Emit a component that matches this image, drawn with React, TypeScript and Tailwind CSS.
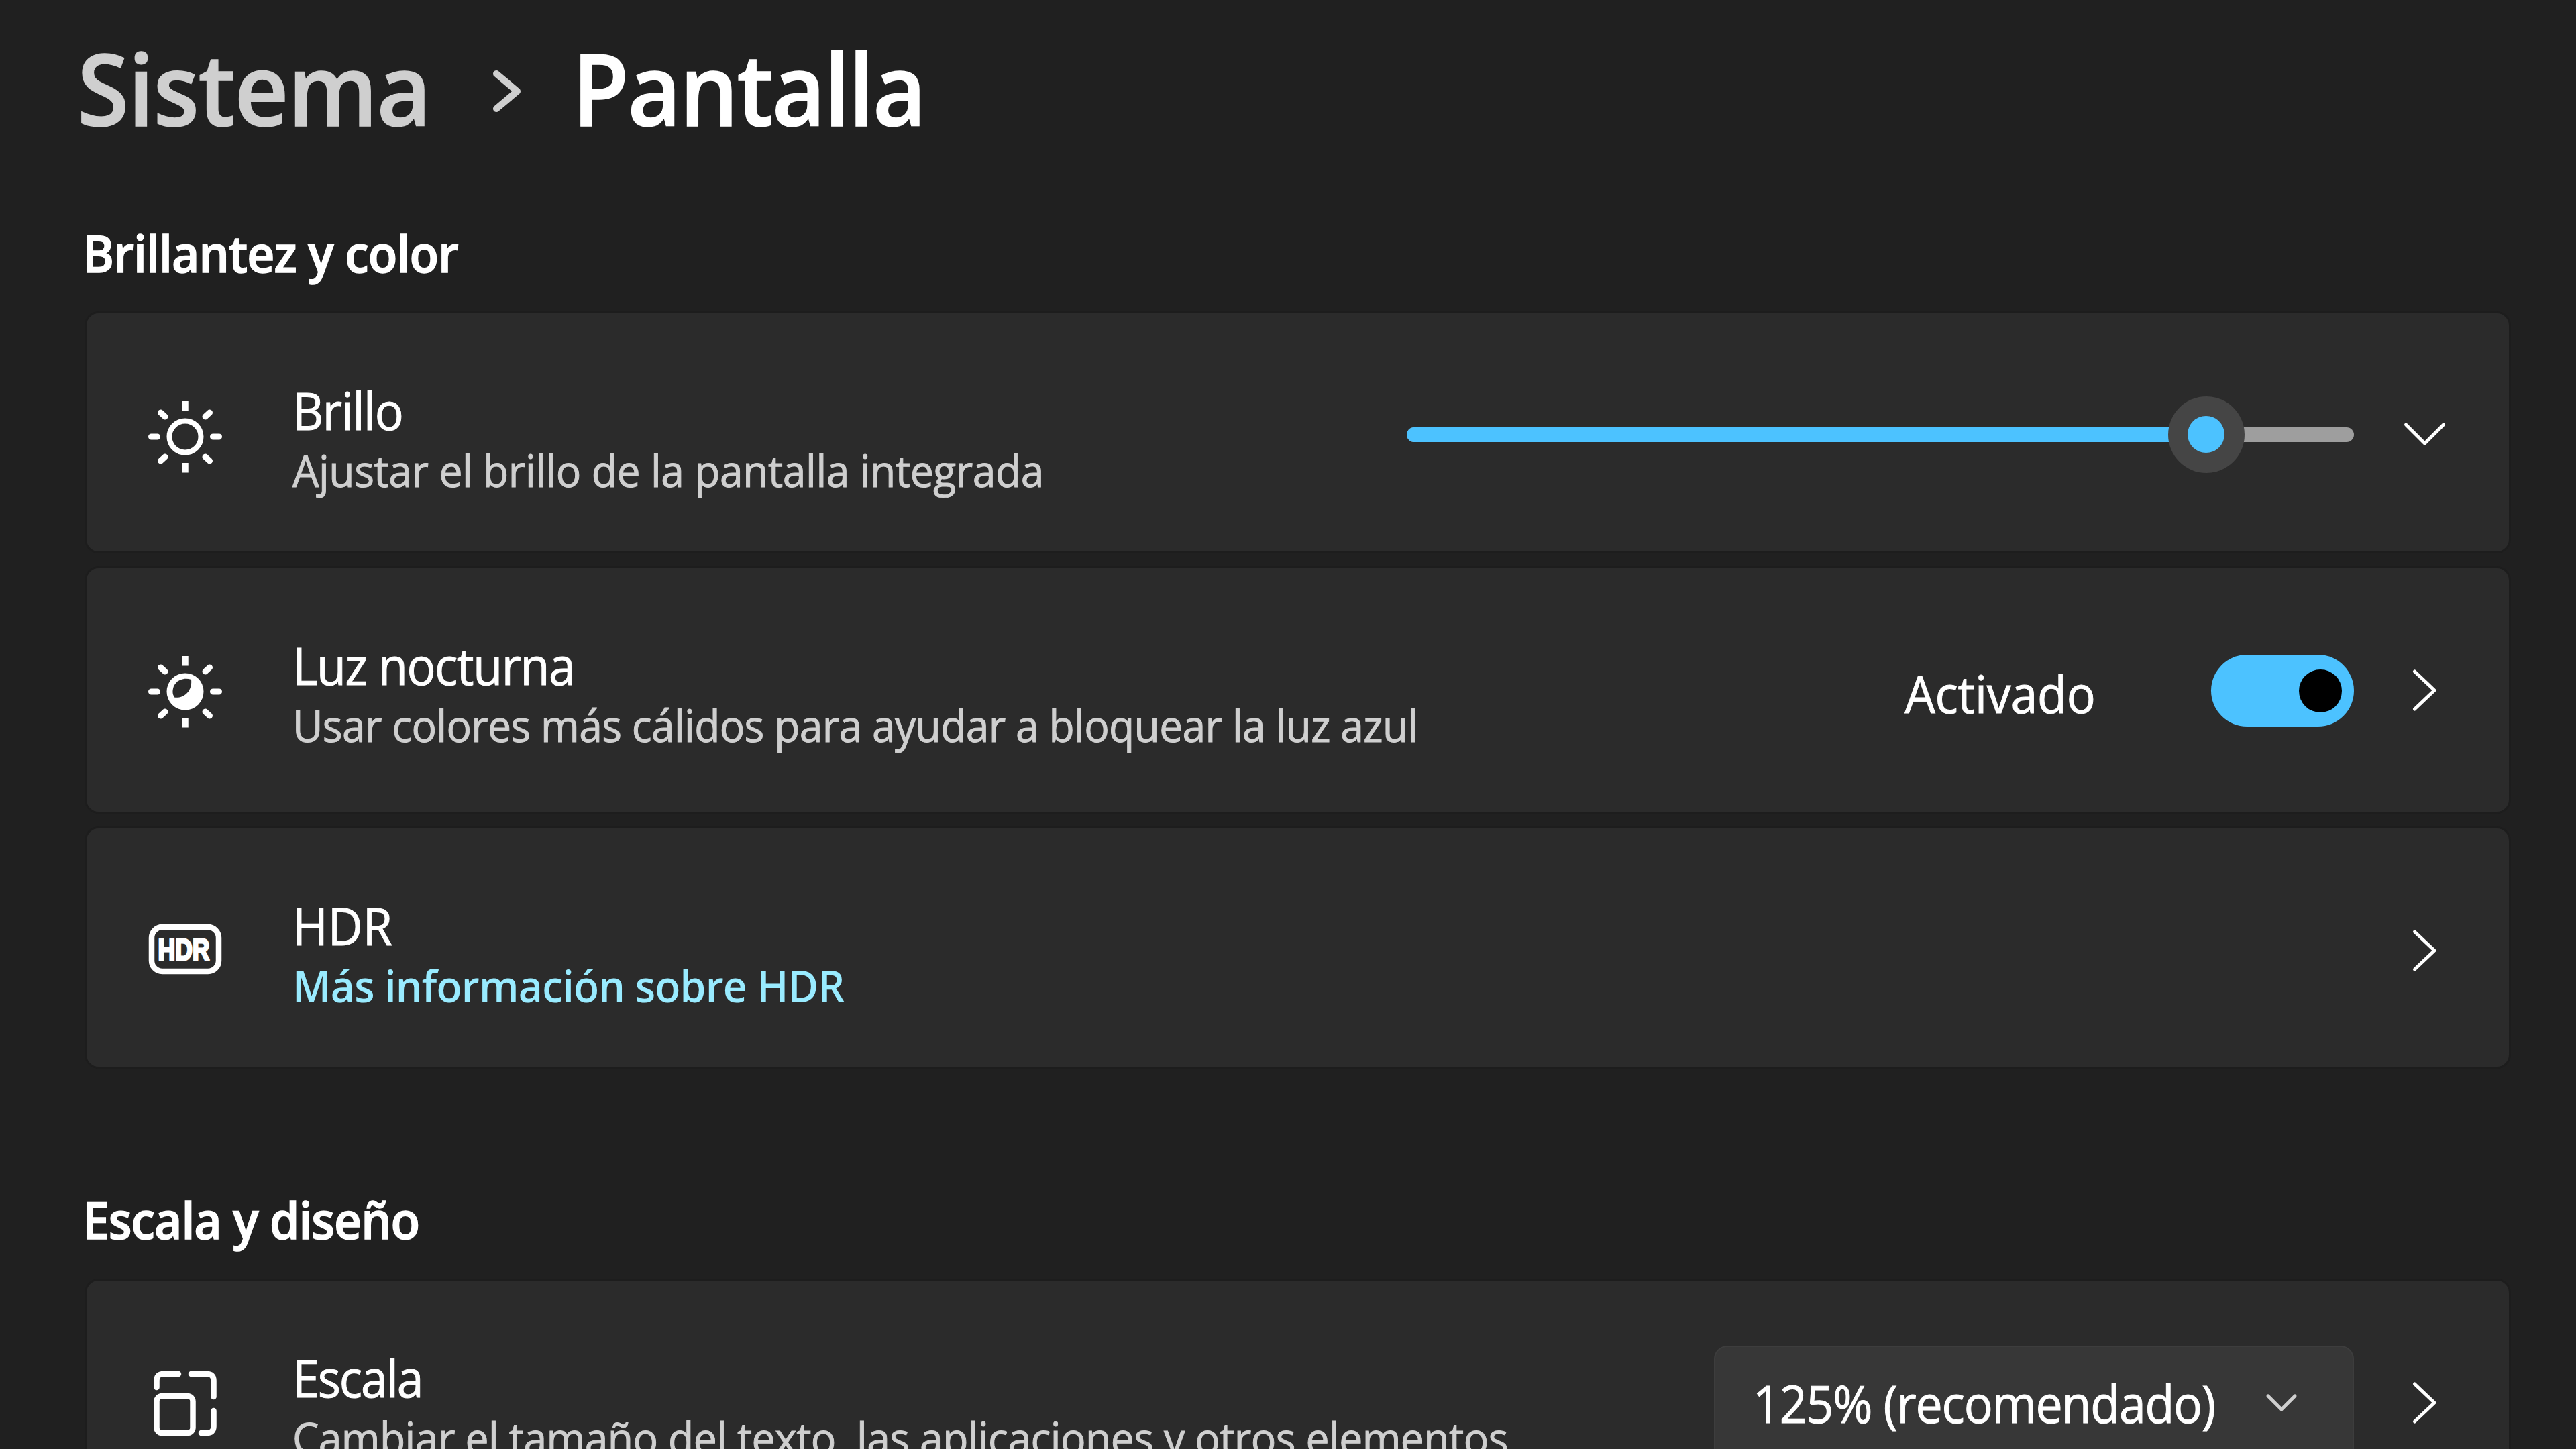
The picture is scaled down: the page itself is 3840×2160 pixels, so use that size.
import type { ReactNode } from 'react';

function Chevron({ className, d, stroke }: { className: string; d: string; stroke: string }) {
  return (
    <svg className={className} viewBox="0 0 70 70" fill="none" stroke={stroke} strokeWidth={5} strokeLinecap="round" strokeLinejoin="round">
      <path d={d} />
    </svg>
  );
}

function ChevronRight() {
  return <Chevron className="size-[70px] shrink-0" d="M20.5 6L50 34L20.5 62" stroke="#ffffff" />;
}

function Rays() {
  return (
    <>
      <path d="M60 7V21.5M60 99V113.5" strokeWidth={9.5} />
      <path d="M9.5 60H18.5M101.5 60H110.5" strokeWidth={9} strokeLinecap="round" />
      <path d="M23.5 24L30 30M96.5 24L90 30M23.5 96L30 90M96.5 96L90 90" strokeWidth={9} strokeLinecap="round" />
    </>
  );
}

function SunIcon() {
  return (
    <svg className="mt-[3px] size-[120px] shrink-0" viewBox="0 0 120 120" fill="none" stroke="white">
      <circle cx="60" cy="60" r="23.5" strokeWidth={8} />
      <Rays />
    </svg>
  );
}

function NightLightIcon() {
  return (
    <svg className="mt-[2px] size-[120px] shrink-0" viewBox="0 0 120 120" fill="none" stroke="white">
      <circle cx="60" cy="60" r="27.5" fill="white" stroke="none" />
      <path d="M69 42C58 38.5 47 43 43 52C41 58 40.5 63 44 68.5C57 70.5 71 60 69 42Z" fill="#2b2b2b" stroke="none" />
      <Rays />
    </svg>
  );
}

function HdrIcon() {
  return (
    <svg className="-mt-[5px] size-[120px] shrink-0" viewBox="0 0 120 120" fill="none">
      <rect x="10" y="27" width="100" height="66" rx="16" stroke="white" strokeWidth={8.5} />
      <text x="19.5" y="76" fill="white" stroke="white" strokeWidth={3} strokeLinejoin="round" fontFamily="Liberation Sans" fontWeight={700} fontSize={44} textLength={77} lengthAdjust="spacingAndGlyphs">
        HDR
      </text>
    </svg>
  );
}

function ScaleIcon() {
  return (
    <svg className="size-[120px] shrink-0" viewBox="0 0 120 120" fill="none" stroke="white" strokeWidth={8.5} strokeLinecap="round">
      <rect x="17.5" y="49" width="54" height="55" rx="8" />
      <path d="M17.5 36V26Q17.5 16 27.5 16H50" />
      <path d="M69 16H92.5Q102.5 16 102.5 26V50" />
      <path d="M102.5 71V94Q102.5 104 92.5 104H84" />
    </svg>
  );
}

type CardProps = {
  className: string;
  icon: ReactNode;
  title: ReactNode;
  subtitle: ReactNode;
  children: ReactNode;
};

function Card({ className, icon, title, subtitle, children }: CardProps) {
  return (
    <div className={`rounded-[18px] bg-[#2b2b2b] shadow-[0_0_0_3px_#1d1d1d] ${className}`}>
      <div className="flex h-[365px] items-center pl-[87px] pr-[91px]">
        {icon}
        <div className="ml-[100px] whitespace-nowrap pt-[14px] [-webkit-text-stroke:1px]">
          <div className="origin-left scale-x-93 text-[77px] leading-[84px] tracking-[-1.5px] text-white">{title}</div>
          <div className="mt-[5px] origin-left scale-x-96 text-[65px] leading-[84px] text-[#cfcfcf]">{subtitle}</div>
        </div>
        <div className="ml-auto flex items-center">{children}</div>
      </div>
    </div>
  );
}

export default function App() {
  const brightness = 84.4;

  return (
    <div className="h-[2160px] w-[3840px] overflow-hidden bg-[#202020] pl-[129px] pr-[100px] font-['Open_Sans','Noto_Sans',sans-serif]">
      <header className="flex h-[261px] items-center whitespace-nowrap text-[148px] font-semibold leading-[261px] [-webkit-text-stroke:1.5px]">
        <span className="-ml-[14px] w-[591px] shrink-0 origin-left scale-x-95 tracking-[-1.6px] text-[#cfcfcf]">Sistema</span>
        <svg className="size-[100px] shrink-0" viewBox="0 0 100 100" fill="none" stroke="#cfcfcf" strokeWidth={10} strokeLinecap="round" strokeLinejoin="round">
          <path d="M34 29L65 55L34 81" />
        </svg>
        <span className="ml-[47px] origin-left scale-x-93 tracking-[-2.3px] text-white">Pantalla</span>
      </header>

      <h2 className="-ml-[6px] mt-[66px] h-[140px] origin-left scale-x-94 whitespace-nowrap text-[76px] font-semibold leading-[100px] tracking-[-1px] text-white [-webkit-text-stroke:1.5px]">
        Brillantez y color
      </h2>

      <div className="flex flex-col gap-[25px]">
        <Card
          className="h-[355px]"
          icon={<SunIcon />}
          title="Brillo"
          subtitle={<span className="tracking-[-0.45px]">Ajustar el brillo de la pantalla integrada</span>}
        >
          <div className="relative -mt-[4px] h-[22px] w-[1412px] rounded-full bg-[#9e9e9e]">
            <div className="h-full rounded-full bg-[#4cc2ff]" style={{ width: `${brightness}%` }} />
            <div
              className="absolute top-1/2 flex size-[114px] -translate-x-1/2 -translate-y-1/2 items-center justify-center rounded-full bg-[#454545]"
              style={{ left: `${brightness}%` }}
            >
              <div className="size-[55px] rounded-full bg-[#4cc2ff]" />
            </div>
          </div>
          <Chevron className="ml-[70px] size-[70px] shrink-0" d="M7.5 18L35.5 46L63.5 18" stroke="#ffffff" />
        </Card>

        <Card
          className="h-[363px]"
          icon={<NightLightIcon />}
          title="Luz nocturna"
          subtitle={<span className="tracking-[-0.7px]">Usar colores más cálidos para ayudar a bloquear la luz azul</span>}
        >
          <span className="mt-[8px] origin-right scale-x-93 text-[77px] leading-[84px] tracking-[-0.2px] text-white [-webkit-text-stroke:1px]">
            Activado
          </span>
          <div className="ml-[172px] flex h-[107px] w-[213px] items-center justify-end rounded-full bg-[#4cc2ff] pr-[18px]">
            <div className="size-[64px] rounded-full bg-black" />
          </div>
          <div className="ml-[70px]">
            <ChevronRight />
          </div>
        </Card>

        <Card
          className="h-[355px]"
          icon={<HdrIcon />}
          title={<span className="tracking-normal">HDR</span>}
          subtitle={<span className="font-semibold tracking-[-0.8px] text-[#99ebff] [-webkit-text-stroke:0px]">Más información sobre HDR</span>}
        >
          <ChevronRight />
        </Card>
      </div>

      <h2 className="-ml-[6px] mt-[177px] h-[142px] origin-left scale-x-94 whitespace-nowrap text-[76px] font-semibold leading-[102px] tracking-[-1.1px] text-white [-webkit-text-stroke:1.5px]">
        Escala y diseño
      </h2>

      <Card
        className="h-[363px]"
        icon={<ScaleIcon />}
        title={<span className="tracking-[-2.2px]">Escala</span>}
        subtitle={<span className="tracking-[-0.6px]">Cambiar el tamaño del texto, las aplicaciones y otros elementos</span>}
      >
        <div className="flex h-[172px] w-[954px] items-center rounded-[20px] border-2 border-[#3d3d3d] bg-[#373737] pl-[56px] pr-[71px]">
          <span className="w-[753px] shrink-0 origin-left scale-x-93 whitespace-nowrap text-[77px] leading-[84px] tracking-[-1.3px] text-white [-webkit-text-stroke:1px]">
            125% (recomendado)
          </span>
          <Chevron className="size-[70px] shrink-0" d="M15 24L35 44L55 24" stroke="#cfcfcf" />
        </div>
        <div className="ml-[70px]">
          <ChevronRight />
        </div>
      </Card>
    </div>
  );
}
